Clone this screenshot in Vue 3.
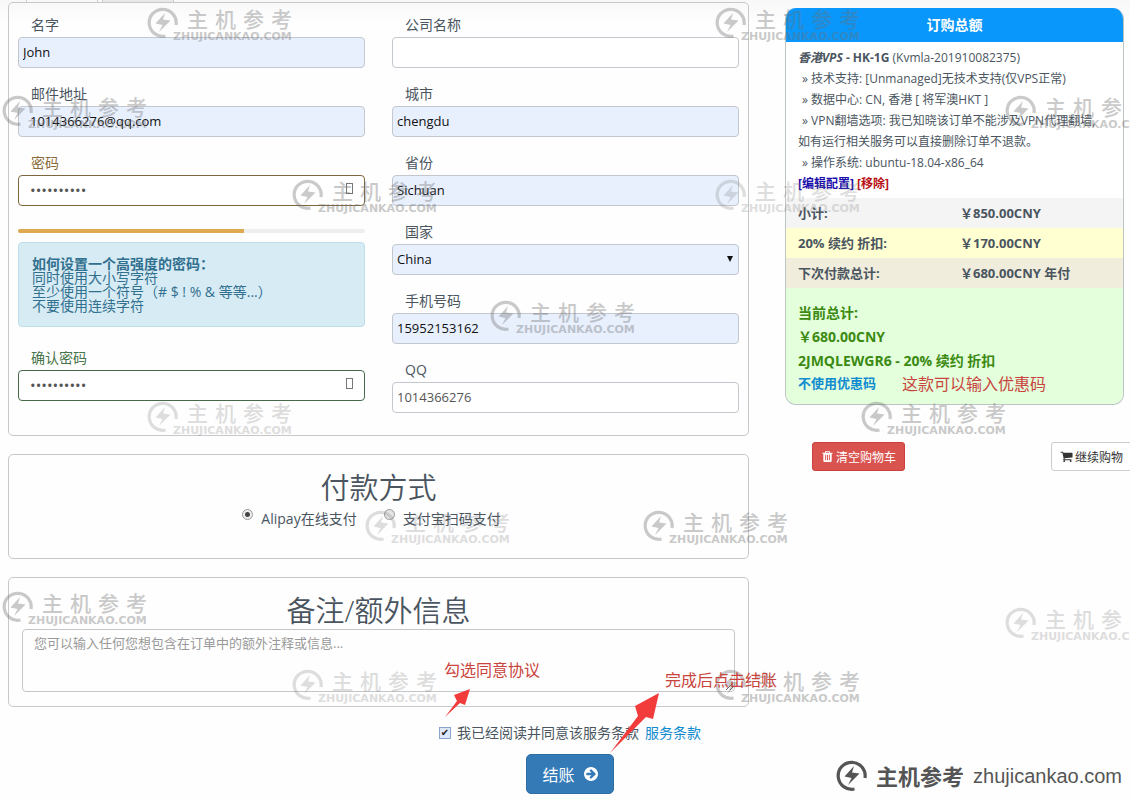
<script setup>
import { ref } from 'vue'

const form = ref({
  name: 'John',
  email: '1014366276@qq.com',
  password: 'abcdefghij',
  confirm: 'abcdefghij',
  company: '',
  city: 'chengdu',
  state: 'Sichuan',
  country: 'China',
  phone: '15952153162',
  qq: '1014366276',
})
const payment = ref('alipay')
const notes = ref('')
const agreed = ref(true)
const strength = 65

const options = [
  '技术支持: [Unmanaged]无技术支持(仅VPS正常)',
  '数据中心: CN, 香港 [ 将军澳HKT ]',
  'VPN翻墙选项: 我已知晓该订单不能涉及VPN代理翻墙,如有运行相关服务可以直接删除订单不退款。',
  '操作系统: ubuntu-18.04-x86_64',
]

const brand = ['主', '机', '参', '考']
const marks = [
  { x: 147, y: 7 },
  { x: 715, y: 7 },
  { x: 2, y: 95 },
  { x: 1005, y: 95 },
  { x: 292, y: 179 },
  { x: 715, y: 179, faint: true },
  { x: 490, y: 300 },
  { x: 147, y: 401, faint: true },
  { x: 861, y: 401 },
  { x: 365, y: 510, faint: true },
  { x: 643, y: 510 },
  { x: 2, y: 591 },
  { x: 1005, y: 607, faint: true },
  { x: 292, y: 669, faint: true },
  { x: 715, y: 669 },
]
</script>

<template>
  <div class="page">
    <nav class="tabs" aria-hidden="true"><span class="tab"></span><span class="tab active"></span></nav>
    <main class="layout">
      <div class="left">
        <section class="panel details">
          <div class="col">
            <div class="field">
              <label for="name">名字</label>
              <input id="name" v-model="form.name" class="control filled" type="text" />
            </div>
            <div class="field">
              <label for="email">邮件地址</label>
              <input id="email" v-model="form.email" class="control filled wide" type="email" />
            </div>
            <div class="field warn">
              <label for="password">密码</label>
              <div class="wrap">
                <input id="password" v-model="form.password" class="control wide secret" type="password" />
                <i class="feedback"></i>
              </div>
            </div>
            <div class="meter"><div class="bar" :style="{ width: strength + '%' }"></div></div>
            <div class="tips">
              <strong>如何设置一个高强度的密码：</strong>
              <span>同时使用大小写字符</span>
              <span>至少使用一个符号（# $ ! % &amp; 等等...）</span>
              <span>不要使用连续字符</span>
            </div>
            <div class="field ok">
              <label for="confirm">确认密码</label>
              <div class="wrap">
                <input id="confirm" v-model="form.confirm" class="control wide secret" type="password" />
                <i class="feedback"></i>
              </div>
            </div>
          </div>
          <div class="col">
            <div class="field">
              <label for="company">公司名称</label>
              <input id="company" v-model="form.company" class="control" type="text" />
            </div>
            <div class="field">
              <label for="city">城市</label>
              <input id="city" v-model="form.city" class="control filled" type="text" />
            </div>
            <div class="field">
              <label for="state">省份</label>
              <input id="state" v-model="form.state" class="control filled" type="text" />
            </div>
            <div class="field">
              <label for="country">国家</label>
              <div class="wrap">
                <select id="country" v-model="form.country" class="control filled">
                  <option>China</option>
                </select>
                <i class="caret"></i>
              </div>
            </div>
            <div class="field">
              <label for="phone">手机号码</label>
              <input id="phone" v-model="form.phone" class="control filled" type="tel" />
            </div>
            <div class="field">
              <label for="qq">QQ</label>
              <input id="qq" v-model="form.qq" class="control" type="text" />
            </div>
          </div>
        </section>

        <section class="panel payment">
          <h2>付款方式</h2>
          <div class="choices">
            <label><input v-model="payment" type="radio" name="pay" value="alipay" />Alipay在线支付</label>
            <label><input v-model="payment" type="radio" name="pay" value="scan" />支付宝扫码支付</label>
          </div>
        </section>

        <section class="panel notes">
          <h2><label for="notes">备注/额外信息</label></h2>
          <textarea id="notes" v-model="notes" placeholder="您可以输入任何您想包含在订单中的额外注释或信息..."></textarea>
        </section>
      </div>

      <aside class="right">
        <section class="summary">
          <h3>订购总额</h3>
          <div class="item">
            <p><b><em>香港VPS</em> - HK-1G</b> (Kvmla-201910082375)</p>
            <p v-for="o in options" :key="o" class="opt">» {{ o }}</p>
            <p class="links"><a class="edit" href="#">[编辑配置]</a> <a class="remove" href="#">[移除]</a></p>
          </div>
          <table>
            <tbody>
              <tr class="sub"><th>小计:</th><td>￥850.00CNY</td></tr>
              <tr class="discount"><th>20% 续约 折扣:</th><td>￥170.00CNY</td></tr>
              <tr class="next"><th>下次付款总计:</th><td>￥680.00CNY 年付</td></tr>
            </tbody>
          </table>
          <div class="total">
            <p>当前总计:</p>
            <p>￥680.00CNY</p>
            <p>2JMQLEWGR6 - 20% 续约 折扣</p>
            <p class="coupon"><a href="#">不使用优惠码</a></p>
          </div>
        </section>
        <div class="actions">
          <button class="btn danger" type="button">
            <svg viewBox="0 0 1792 1792"><path d="M704 1376v-704q0-14-9-23t-23-9h-64q-14 0-23 9t-9 23v704q0 14 9 23t23 9h64q14 0 23-9t9-23zm256 0v-704q0-14-9-23t-23-9h-64q-14 0-23 9t-9 23v704q0 14 9 23t23 9h64q14 0 23-9t9-23zm256 0v-704q0-14-9-23t-23-9h-64q-14 0-23 9t-9 23v704q0 14 9 23t23 9h64q14 0 23-9t9-23zm-544-992h448l-48-117q-7-9-17-11h-317q-10 2-17 11zm928 32v64q0 14-9 23t-23 9h-96v948q0 83-47 143.500t-113 60.500h-832q-66 0-113-58.500t-47-141.500v-952h-96q-14 0-23-9t-9-23v-64q0-14 9-23t23-9h309l70-167q15-37 54-63t79-26h320q40 0 79 26t54 63l70 167h309q14 0 23 9t9 23z" /></svg>
            清空购物车
          </button>
          <button class="btn" type="button">
            <svg viewBox="0 0 1792 1792"><path d="M704 1536q0 52-38 90t-90 38-90-38-38-90 38-90 90-38 90 38 38 90zm896 0q0 52-38 90t-90 38-90-38-38-90 38-90 90-38 90 38 38 90zm128-1088v512q0 24-16.500 42.500t-40.500 21.500l-1044 122q13 60 13 70 0 16-24 64h920q26 0 45 19t19 45-19 45-45 19h-1024q-26 0-45-19t-19-45q0-11 8-31.500t16-36 21.500-40 15.500-29.500l-177-823h-204q-26 0-45-19t-19-45 19-45 45-19h256q16 0 28.500 6.500t19.500 15.500 13 24.500 8 26 5.500 29.500 4.500 26h1201q26 0 45 19t19 45z" /></svg>
            继续购物
          </button>
        </div>
      </aside>
    </main>

    <footer class="checkout">
      <div class="agree">
        <input id="agree" v-model="agreed" type="checkbox" />
        <label for="agree">我已经阅读并同意该服务条款</label>
        <a href="#">服务条款</a>
      </div>
      <button class="submit" type="button">
        结账
        <svg viewBox="0 0 1536 1536"><path d="M1285 768q0-27-18-45l-362-362-91-91q-18-18-45-18t-45 18l-91 91q-18 18-18 45t18 45l189 189h-502q-26 0-45 19t-19 45v128q0 26 19 45t45 19h502l-189 189q-19 19-19 45t19 45l91 91q18 18 45 18t45-18l91-91 362-362q18-18 18-45zm251 0q0 209-103 385.500t-279.500 279.500-385.500 103-385.500-103-279.500-279.500-103-385.500 103-385.500 279.500-279.500 385.500-103 385.500 103 279.500 279.500 103 385.500z" /></svg>
      </button>
    </footer>

    <div class="overlay">
      <svg class="defs" width="0" height="0">
        <symbol id="bolt" viewBox="0 0 31 31">
          <path d="M29 18A13.500 13.500 0 1 0 18.500 29" fill="none" stroke="currentColor" stroke-width="3.200" />
          <path d="M18 6L8.500 16.500L15.500 18L12 25L23.500 13.500L16 12.500Z" fill="currentColor" />
        </symbol>
      </svg>
      <div
        v-for="(m, i) in marks"
        :key="i"
        class="mark"
        :class="{ faint: m.faint }"
        :style="{ left: m.x + 'px', top: m.y + 'px' }"
      >
        <svg class="logo"><use href="#bolt" /></svg>
        <div class="words">
          <div class="cjk"><span v-for="c in brand" :key="c">{{ c }}</span></div>
          <div class="domain">ZHUJICANKAO.COM</div>
        </div>
      </div>

      <svg class="arrow small" viewBox="0 0 25 28"><path d="M0 28L12 12L9 6L25 0L20 16L15 14Z" /></svg>
      <svg class="arrow large" viewBox="0 0 49 60"><path d="M0 60L28 23L25 13L49 0L43 26L36 24L2 58Z" /></svg>
      <span class="note agree-note">勾选同意协议</span>
      <span class="note submit-note">完成后点击结账</span>
      <span class="note coupon-note">这款可以输入优惠码</span>

      <div class="signature">
        <svg class="logo"><use href="#bolt" /></svg>
        <b>主机参考</b>
        <span>zhujicankao.com</span>
      </div>
    </div>
  </div>
</template>

<style>
body {
  margin: 0;
  background: #fefefe;
}
</style>

<style scoped>
.page {
  position: relative;
  overflow: hidden;
  min-height: 100vh;
  box-sizing: border-box;
  background: linear-gradient(#f8f8f8, #fefefe 24px);
  color: #4a5560;
  font: 14px/20px "Open Sans", "Noto Sans CJK SC", sans-serif;
}
.page *,
.page *::after {
  box-sizing: border-box;
}
h2,
h3,
p {
  margin: 0;
}
a {
  text-decoration: none;
}
input,
select,
textarea,
button {
  font-family: inherit;
  margin: 0;
}
.tabs {
  display: flex;
  gap: 4px;
  height: 2px;
  padding-left: 26px;
}
.tab {
  width: 72px;
  border: 1px solid #ccc;
  border-width: 0 1px;
}
.tab.active {
  background: #e8e8e8;
}
.layout {
  display: grid;
  grid-template-columns: minmax(0, 1fr) 339px;
  gap: 36px;
  padding: 0 6px 0 8px;
  align-items: start;
}
.left {
  display: flex;
  flex-direction: column;
  gap: 18px;
}
.panel {
  border: 1px solid #c6c8ca;
  border-radius: 5px;
}
.details {
  display: grid;
  grid-template-columns: 1fr 1fr;
  gap: 27px;
  padding: 10px 9px 8px;
}
.field {
  margin-bottom: 14px;
}
.field > label {
  display: block;
  height: 24px;
  padding: 2px 0 0 13px;
}
.control {
  display: block;
  width: 100%;
  height: 31px;
  padding: 0 4px 2px;
  border: 1px solid #c3c7ce;
  border-radius: 4px;
  background: #fff;
  color: #555;
  font-size: 13px;
  outline: 0;
  appearance: none;
}
.control.filled {
  background: #e8f0fe;
  color: #111;
}
.control.wide {
  padding-left: 11px;
}
.control.secret {
  font-size: 15px;
}
.wrap {
  position: relative;
}
.feedback {
  position: absolute;
  right: 12px;
  top: 8px;
  width: 7px;
  height: 11px;
  border: 1px solid #777;
}
.caret {
  position: absolute;
  right: 6px;
  top: 12px;
  border: 3px solid transparent;
  border-top: 6px solid #111;
  border-bottom: 0;
}
.warn > label {
  color: #8a6d3b;
}
.warn .control {
  border-color: #7d673f;
}
.ok > label {
  color: #47734a;
}
.ok .control {
  border-color: #47694a;
}
.meter {
  height: 4px;
  margin-top: 23px;
  border-radius: 2px;
  background: #eee;
  overflow: hidden;
}
.bar {
  height: 100%;
  background: #dfa94f;
}
.warn {
  margin-bottom: 0;
}
.tips {
  display: flex;
  flex-direction: column;
  height: 85px;
  margin: 9px 0 19px;
  padding: 14px 13px;
  border: 1px solid #bce0ea;
  border-radius: 4px;
  background: #d7ebf4;
  color: #31708f;
  line-height: 14px;
}
h2 {
  font-size: 29px;
  font-weight: 350;
  line-height: 36px;
  text-align: center;
}
.payment {
  height: 105px;
  padding-top: 15px;
}
.choices {
  display: flex;
  justify-content: center;
  gap: 27px;
  padding-right: 14px;
  margin-top: 3px;
}
.choices label {
  display: flex;
  gap: 8px;
}
.choices input {
  width: 11px;
  height: 11px;
  border: 1px solid #999;
  border-radius: 50%;
  background: #e4e4e4;
  appearance: none;
}
.choices input:checked {
  background: radial-gradient(circle, #444 2px, #eee 3px);
}
.notes {
  padding: 15px 13px 14px;
}
textarea {
  display: block;
  width: 100%;
  height: 63px;
  padding: 4px 11px;
  border: 1px solid #c3c7ca;
  border-radius: 4px;
  background: transparent;
  color: #555;
  font-size: 13px;
  line-height: 18px;
}
textarea::placeholder {
  color: #999;
}
.right {
  padding-top: 6px;
}
.summary {
  border: 1px solid #bcc4c4;
  border-top: 0;
  border-radius: 11px;
  overflow: hidden;
  background: #fff;
}
h3 {
  background: #0a97fb;
  color: #fff;
  font-size: 14px;
  line-height: 34px;
  text-align: center;
}
.item {
  padding: 5px 20px 4px 12px;
  font-size: 12px;
  line-height: 21px;
}
.opt {
  text-indent: 4px;
}
.links {
  font-weight: 700;
}
.edit {
  color: #1a0dab;
}
.remove {
  color: #b90f16;
}
table {
  width: 100%;
  border-collapse: collapse;
  font-size: 13px;
  font-weight: 700;
}
th,
td {
  height: 30px;
  padding: 0;
  text-align: left;
}
th {
  width: 174px;
  padding-left: 12px;
}
.sub {
  background: #f4f4f4;
}
.discount {
  background: #ffffd2;
}
.next {
  background: #f0eddc;
}
.total {
  padding: 13px 12px 11px;
  background: #e3ffdc;
  color: #3c8a12;
  font-size: 14px;
  font-weight: 700;
  line-height: 24px;
}
.coupon {
  font-size: 13px;
  line-height: 20px;
}
.total a,
.agree a {
  color: #108bd0;
}
.actions {
  display: flex;
  justify-content: space-between;
  margin: 37px -8px 0 27px;
}
.btn {
  display: flex;
  align-items: center;
  gap: 2px;
  height: 29px;
  padding: 0 8px;
  border: 1px solid #ccc;
  border-radius: 3px;
  background: #fff;
  color: #333;
  font-size: 12px;
  white-space: nowrap;
}
.btn svg {
  width: 13px;
  height: 13px;
  fill: currentColor;
}
.danger {
  border-color: #c9403c;
  background: #d9534f;
  color: #fff;
}
.checkout {
  display: flex;
  flex-direction: column;
  align-items: center;
  gap: 11px;
  padding: 16px 0 6px 10px;
}
.agree {
  display: flex;
  align-items: center;
  gap: 6px;
}
.agree input {
  display: grid;
  place-items: center;
  width: 12px;
  height: 12px;
  border: 1px solid #8aa4cc;
  background: #dde8f8;
  appearance: none;
}
.agree input:checked::after {
  content: "✔";
  color: #222;
  font: 10px/10px "DejaVu Sans", sans-serif;
}
.submit {
  display: flex;
  align-items: center;
  gap: 9px;
  height: 40px;
  padding: 0 15px;
  border: 1px solid #2e6da4;
  border-radius: 5px;
  background: #337ab7;
  color: #fff;
  font-size: 16px;
}
.submit svg {
  width: 14px;
  height: 14px;
  fill: currentColor;
}
.overlay {
  position: absolute;
  inset: 0;
  pointer-events: none;
}
.defs {
  position: absolute;
}
.logo {
  width: 31px;
  height: 31px;
}
.mark {
  position: absolute;
  color: #6e6e6e;
  opacity: 0.36;
}
.mark.faint {
  opacity: 0.22;
}
.words {
  position: absolute;
  left: 26px;
  top: 0;
}
.cjk {
  display: flex;
  gap: 7px;
  padding-left: 14px;
  font: 500 21px/23px "Noto Sans CJK SC", sans-serif;
}
.domain {
  font: 700 11px/13px "DejaVu Sans", sans-serif;
}
.arrow {
  position: absolute;
  fill: #f23b3b;
}
.small {
  left: 445px;
  top: 689px;
  width: 25px;
  height: 28px;
}
.large {
  left: 610px;
  top: 693px;
  width: 49px;
  height: 60px;
}
.note {
  position: absolute;
  color: #c9443c;
  font-size: 16px;
  white-space: nowrap;
}
.agree-note {
  left: 444px;
  top: 660px;
}
.submit-note {
  left: 665px;
  top: 670px;
}
.coupon-note {
  left: 902px;
  top: 374px;
}
.signature {
  position: absolute;
  right: 8px;
  top: 760px;
  display: flex;
  align-items: center;
  gap: 9px;
  color: #555;
  white-space: nowrap;
}
.signature b {
  font-size: 22px;
}
.signature span {
  font: 20px/24px "Liberation Sans", sans-serif;
}
</style>
